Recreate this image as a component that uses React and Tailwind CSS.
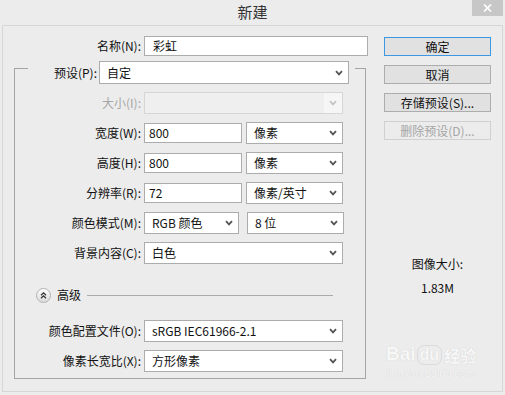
import React from 'react';

function Chevron({ disabled }) {
  return (
    <svg width="8" height="6" viewBox="0 0 8 6" className="shrink-0">
      <path
        d="M1 1.2 L4 4.4 L7 1.2"
        fill="none"
        stroke={disabled ? '#c4c4c4' : '#555555'}
        strokeWidth="1.8"
      />
    </svg>
  );
}

function Select({ value, className = '' }) {
  return (
    <div
      className={`flex h-[22px] items-center justify-between border border-[#acacac] bg-white pl-[7px] pr-[5px] ${className}`}
    >
      <span>{value}</span>
      <Chevron />
    </div>
  );
}

function Field({ value, className = '' }) {
  return (
    <div className={`flex h-[20px] items-center border border-[#acacac] bg-white pl-[4px] ${className}`}>
      {value}
    </div>
  );
}

function Row({ label, children, disabled, className = 'mt-[8px]' }) {
  return (
    <div className={`flex h-[22px] items-center ${className}`}>
      <span className={`w-[126px] text-right ${disabled ? 'text-[#a6a6a6]' : 'text-[#111]'}`}>{label}</span>
      <div className="ml-[3px] flex items-center">{children}</div>
    </div>
  );
}

function Btn({ children, primary, disabled }) {
  let look = 'border-[#adadad] bg-[#e1e1e1] text-[#111]';
  if (primary) look = 'border-[#3c98e2] bg-[#e1e1e1] text-[#111]';
  if (disabled) look = 'border-[#d0d0d0] bg-[#ececec] text-[#a6a6a6]';
  return (
    <div className={`flex h-[19px] w-[107px] items-center justify-center border ${look}`}>
      {children}
    </div>
  );
}

export default function App() {
  return (
    <div className="relative h-[395px] w-[505px] overflow-hidden bg-[#ececec] font-['Noto_Sans_CJK_SC',sans-serif] text-[12px] leading-[14px] text-[#111]">
      {/* title bar */}
      <div className="flex h-[25px]">
        <div className="w-[33px]" />
        <div className="flex-1 text-center text-[15px] leading-[23px] text-[#333]">新建</div>
        <div className="w-[33px]">
          <div className="flex h-[16px] w-[31px] items-center justify-center bg-[#c7c7c7]">
            <svg width="9" height="8" viewBox="0 0 9 8">
              <path d="M1 0.5 L8 7.5 M8 0.5 L1 7.5" stroke="#fff" strokeWidth="1.7" />
            </svg>
          </div>
        </div>
      </div>

      {/* client */}
      <div className="ml-[2px] flex h-[367px] w-[501px] border border-[#d6d6d6]">
        <div className="w-[373px]">
          <div className="mt-[10px] flex h-[20px] items-center">
            <span className="w-[138px] text-right">名称(N):</span>
            <Field value="彩虹" className="ml-[3px] w-[224px] pl-[8px]" />
          </div>

          <div className="ml-[11px] mt-[12px] flex h-[311px] w-[352px] flex-col border border-[#a5a5a5]">
            <div className="ml-[13px] -mt-[8px] flex h-[23px] items-center self-start bg-[#ececec] pr-[6px]">
              <span className="w-[69px] text-right">预设(P):</span>
              <Select value="自定" className="ml-[2px] h-[23px] w-[250px]" />
            </div>

            <Row label="大小(I):" disabled>
              <div className="flex h-[22px] w-[199px] border border-[#d6d6d6] bg-[#efefef]">
                <div className="flex-1" />
                <div className="flex w-[18px] items-center justify-center bg-[#f6f6f6]">
                  <Chevron disabled />
                </div>
              </div>
            </Row>
            <Row label="宽度(W):">
              <Field value="800" className="w-[98px]" />
              <Select value="像素" className="ml-[4px] w-[97px]" />
            </Row>
            <Row label="高度(H):">
              <Field value="800" className="w-[98px]" />
              <Select value="像素" className="ml-[4px] w-[97px]" />
            </Row>
            <Row label="分辨率(R):">
              <Field value="72" className="w-[98px]" />
              <Select value="像素/英寸" className="ml-[4px] w-[97px]" />
            </Row>
            <Row label="颜色模式(M):">
              <Select value="RGB 颜色" className="w-[95px]" />
              <Select value="8 位" className="ml-[8px] w-[97px]" />
            </Row>
            <Row label="背景内容(C):">
              <Select value="白色" className="w-[199px]" />
            </Row>

            <div className="ml-[21px] mt-[23px] flex h-[16px] w-[297px] items-center">
              <div className="flex h-[15px] w-[15px] items-center justify-center rounded-full border border-[#b3b3b3] bg-gradient-to-b from-white to-[#dadada]">
                <svg width="7" height="7" viewBox="0 0 7 7">
                  <path d="M1 3.2 L3.5 0.9 L6 3.2 M1 6.2 L3.5 3.9 L6 6.2" fill="none" stroke="#333" strokeWidth="1.2" />
                </svg>
              </div>
              <span className="ml-[6px]">高级</span>
              <div className="ml-[6px] h-px flex-1 bg-[#aaaaaa]" />
            </div>

            <Row label="颜色配置文件(O):" className="mt-[17px]">
              <Select value="sRGB IEC61966-2.1" className="w-[199px]" />
            </Row>
            <Row label="像素长宽比(X):">
              <Select value="方形像素" className="w-[199px]" />
            </Row>
          </div>
        </div>

        <div className="ml-[8px] mt-[11px] flex w-[107px] flex-col">
          <div className="flex flex-col gap-[9px]">
            <Btn primary>确定</Btn>
            <Btn>取消</Btn>
            <Btn>存储预设(S)...</Btn>
            <Btn disabled>删除预设(D)...</Btn>
          </div>
          <div className="mt-[115px] text-center leading-[18px]">图像大小:</div>
          <div className="mt-[6px] text-center leading-[18px]">1.83M</div>
        </div>
      </div>

      {/* watermark */}
      <div className="pointer-events-none absolute left-[386px] top-[343px] flex flex-col items-center text-[#f7f7f7] [text-shadow:0_0_1px_#c9c9c9]">
        <div className="flex items-end font-['Liberation_Sans',sans-serif] text-[19px] font-bold leading-[22px]">
          <span>Bai</span>
          <span className="ml-[1px] rounded-[7px] border border-[#dadada] px-[2px] text-[16px] leading-[18px]">du</span>
          <span className="ml-[2px] font-['Noto_Sans_CJK_SC',sans-serif] text-[16px] leading-[20px]">经验</span>
        </div>
        <div className="mt-[2px] font-['Liberation_Sans',sans-serif] text-[11px] leading-[12px]">jingyan.baidu.com</div>
      </div>
    </div>
  );
}
